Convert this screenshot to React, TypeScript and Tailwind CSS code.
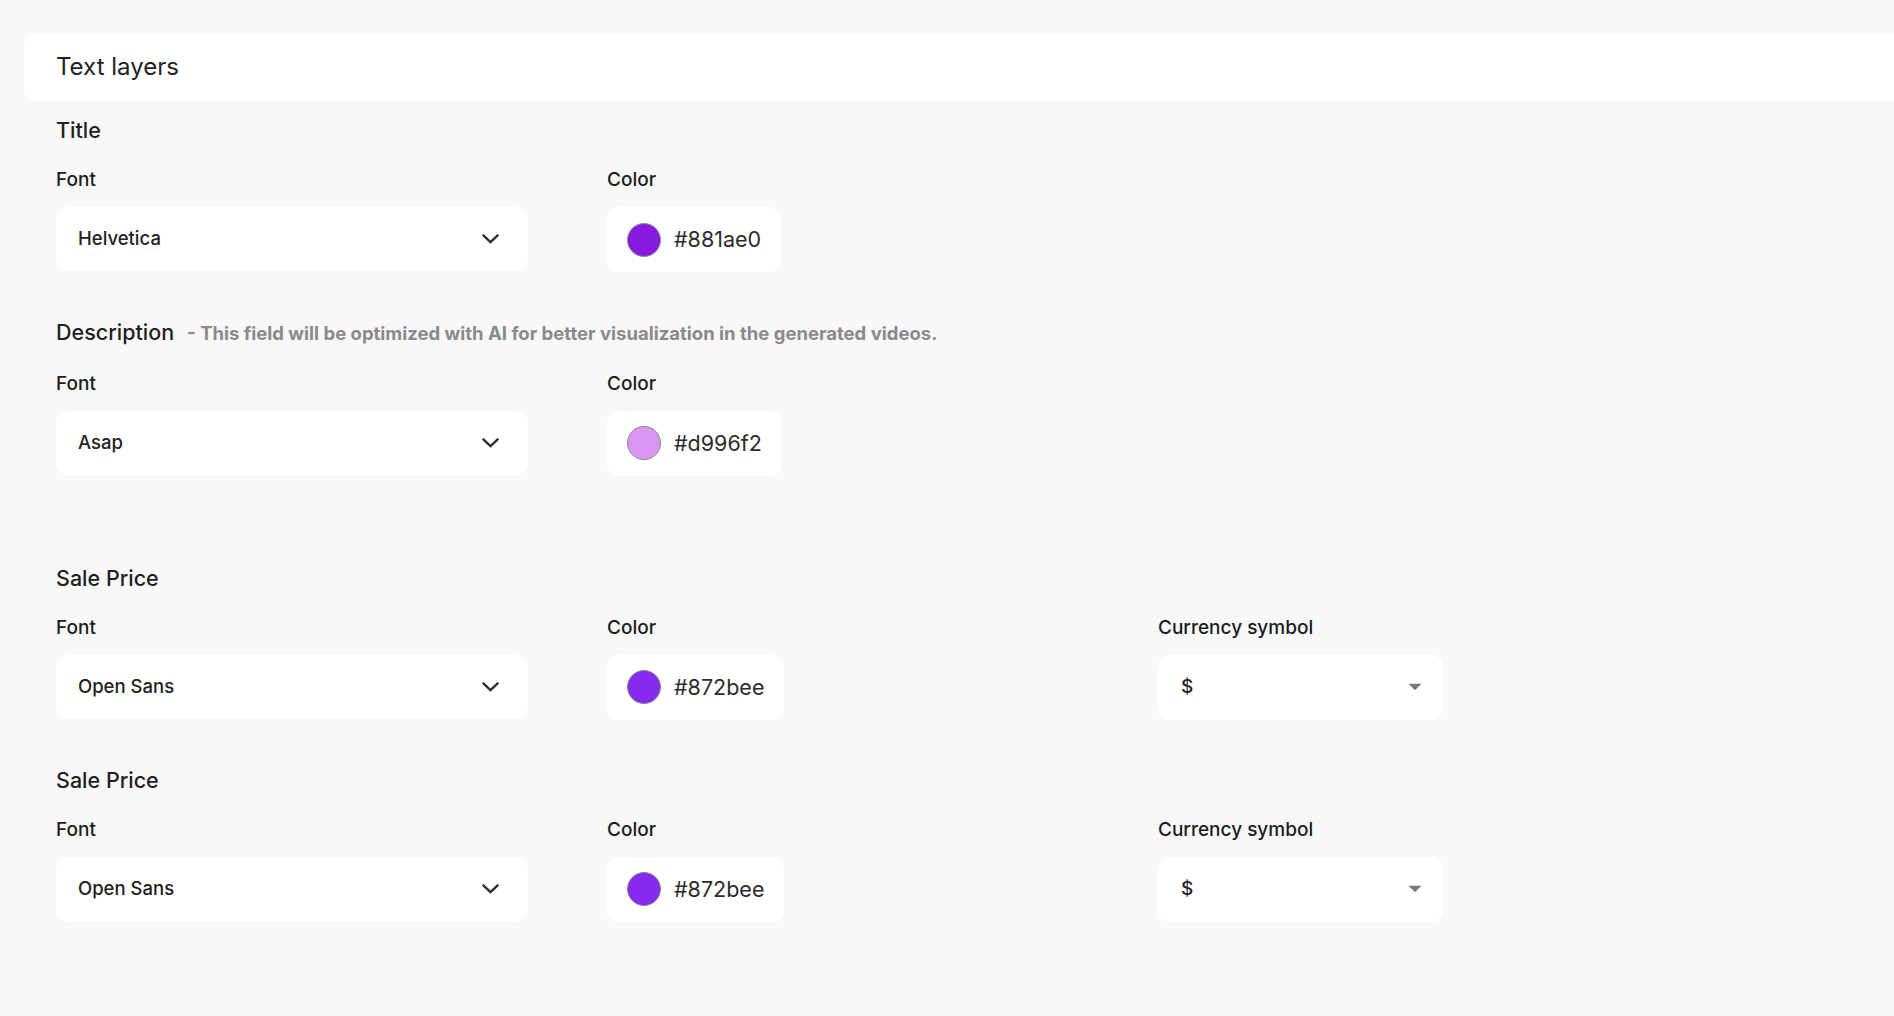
import React from "react";

type Field = {
  font: string;
  color: string;
  currency?: string;
};

type Section = {
  title: string;
  note?: string;
  field: Field;
  extraSpace?: boolean;
};

const SECTIONS: Section[] = [
  { title: "Title", field: { font: "Helvetica", color: "#881ae0" } },
  {
    title: "Description",
    note: "- This field will be optimized with AI for better visualization in the generated videos.",
    field: { font: "Asap", color: "#d996f2" },
    extraSpace: true,
  },
  { title: "Sale Price", field: { font: "Open Sans", color: "#872bee", currency: "$" } },
  { title: "Sale Price", field: { font: "Open Sans", color: "#872bee", currency: "$" } },
];

function Chevron() {
  return (
    <svg width="17" height="10" viewBox="0 0 17 10" fill="none" aria-hidden="true">
      <path d="M1.6 1.6 L8.5 8.2 L15.4 1.6" stroke="#2e2e2e" strokeWidth="2.4" strokeLinecap="square" />
    </svg>
  );
}

function Caret() {
  return (
    <svg width="14" height="8" viewBox="0 0 14 8" aria-hidden="true">
      <path d="M0.5 0.8 H13.5 L7 7.2 Z" fill="#7a7a7a" />
    </svg>
  );
}

function Label({ children }: { children: React.ReactNode }) {
  return <div className="text-[19px] leading-6 font-medium text-[#1c1c1c]">{children}</div>;
}

function FieldRow({ field }: { field: Field }) {
  return (
    <div className="mt-6 grid grid-cols-[551px_551px_551px]">
      {/* Font select */}
      <div>
        <Label>Font</Label>
        <div className="mt-[15px] w-[472px] h-16 bg-white rounded-xl flex items-center justify-between pl-[22px] pr-[29px]">
          <span className="text-[18.5px] font-medium text-[#222]">{field.font}</span>
          <Chevron />
        </div>
      </div>

      {/* Color picker */}
      <div>
        <Label>Color</Label>
        <div className="mt-[15px] inline-flex h-[65px] items-center gap-[13px] bg-white rounded-xl pl-5 pr-5">
          <span
            className="w-[34px] h-[34px] rounded-full border border-[#8a8a8a]"
            style={{ backgroundColor: field.color }}
          />
          <span className="text-[21.5px] text-[#2b2b2b]">{field.color}</span>
        </div>
      </div>

      {/* Currency */}
      {field.currency && (
        <div>
          <Label>Currency symbol</Label>
          <div className="mt-[15px] w-[285px] h-[65px] bg-white rounded-xl flex items-center justify-between pl-[23px] pr-[21px]">
            <span className="text-[19px] font-medium text-[#222]">{field.currency}</span>
            <Caret />
          </div>
        </div>
      )}
    </div>
  );
}

export default function App() {
  return (
    <div className="min-h-screen bg-[#f8f8f8] pt-[34px] font-['Inter',sans-serif] overflow-hidden">
      <div className="ml-6 h-[67px] flex items-center pl-8 pb-[2px] bg-white rounded-l-[10px]">
        <h1 className="text-[24px] leading-8 text-[#1f1f1f]">Text layers</h1>
      </div>

      <div className="pl-14 pt-[15px] flex flex-col gap-[46px]">
        {SECTIONS.map((s, i) => (
          <section key={i} className={s.extraSpace ? "mb-[42px]" : ""}>
            <div className="flex items-baseline gap-[13px]">
              <h2 className="text-[21.5px] leading-7 font-medium text-[#1f1f1f]">{s.title}</h2>
              {s.note && <span className="text-[18.5px] font-bold text-[#8a8a8a]">{s.note}</span>}
            </div>
            <FieldRow field={s.field} />
          </section>
        ))}
      </div>
    </div>
  );
}
